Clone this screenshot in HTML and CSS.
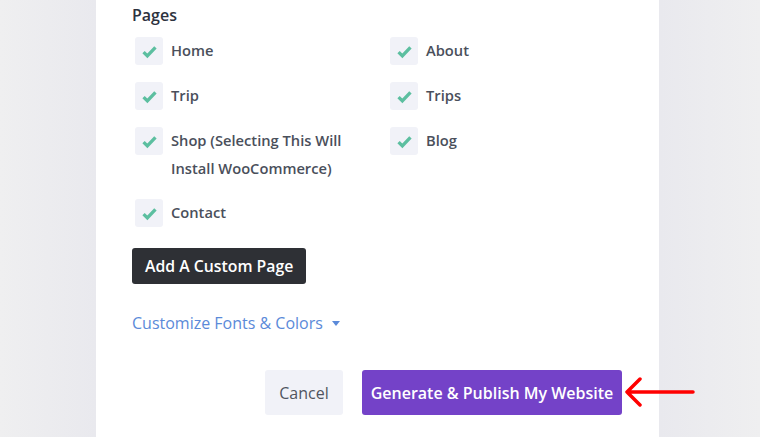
FILE: index.html
```html
<!DOCTYPE html>
<html lang="en">
<head>
    <meta charset="UTF-8">
    <meta name="viewport" content="width=device-width, initial-scale=1.0">
    <title>Onboarding - Pages</title>
    <link rel="stylesheet" href="styles.css">
</head>
<body>
    <div class="panel">
        <h3 class="label">Pages</h3>

        <div class="pages">
            <label class="page"><span class="box"><svg viewBox="0 0 16 16"><path d="M3 8.5l3.2 3.2L13 4.5"/></svg></span><span>Home</span></label>
            <label class="page"><span class="box"><svg viewBox="0 0 16 16"><path d="M3 8.5l3.2 3.2L13 4.5"/></svg></span><span>About</span></label>
            <label class="page"><span class="box"><svg viewBox="0 0 16 16"><path d="M3 8.5l3.2 3.2L13 4.5"/></svg></span><span>Trip</span></label>
            <label class="page"><span class="box"><svg viewBox="0 0 16 16"><path d="M3 8.5l3.2 3.2L13 4.5"/></svg></span><span>Trips</span></label>
            <label class="page"><span class="box"><svg viewBox="0 0 16 16"><path d="M3 8.5l3.2 3.2L13 4.5"/></svg></span><span>Shop (Selecting This Will Install WooCommerce)</span></label>
            <label class="page"><span class="box"><svg viewBox="0 0 16 16"><path d="M3 8.5l3.2 3.2L13 4.5"/></svg></span><span>Blog</span></label>
            <label class="page"><span class="box"><svg viewBox="0 0 16 16"><path d="M3 8.5l3.2 3.2L13 4.5"/></svg></span><span>Contact</span></label>
        </div>

        <button class="button dark">Add A Custom Page</button>

        <a class="toggle" href="#">Customize Fonts &amp; Colors <span class="caret"></span></a>

        <div class="actions">
            <button class="button light">Cancel</button>
            <button class="button purple">Generate &amp; Publish My Website</button>
            <svg class="arrow" viewBox="0 0 72 32">
                <path d="M70 15H4M17 2L4 15l13 13"/>
            </svg>
        </div>
    </div>
</body>
</html>
```

FILE: styles.css
```css
body {
    margin: 0;
    height: 437px;
    overflow: hidden;
    font-family: "Open Sans", Arial, sans-serif;
    background: linear-gradient(to right, #efeff0 0%, #e9e9ee 12.6%, #e9e9ee 86.8%, #efeff0 100%);
}
.panel {
    margin-left: 96px;
    width: 527px;
    height: 437px;
    padding-left: 36px;
    background: #fff;
}
.label {
    margin: 0;
    padding-top: 4px;
    font-size: 16px;
    font-weight: 600;
    line-height: 22px;
    color: #2d323e;
}
.pages {
    display: grid;
    grid-template-columns: 255px 240px;
    row-gap: 17px;
    margin-top: 11px;
    padding-left: 3px;
}
.page {
    display: flex;
    align-items: flex-start;
    gap: 8px;
    font-size: 14.7px;
    font-weight: 600;
    line-height: 27.5px;
    color: #4a4f5b;
}
.page span:last-child {
    width: 200px;
}
.box {
    flex: none;
    width: 28px;
    height: 28px;
    border-radius: 3px;
    background: #f1f2f8;
    display: flex;
    align-items: center;
    justify-content: center;
}
.box svg {
    width: 19px;
    height: 19px;
    fill: none;
    stroke: #5cbfa0;
    stroke-width: 2.8;
}
.button {
    border: none;
    border-radius: 3px;
    font-family: inherit;
    font-weight: 600;
    white-space: nowrap;
    cursor: pointer;
}
.dark {
    display: block;
    margin-top: 21px;
    height: 36px;
    padding: 0 13px;
    font-size: 15.8px;
    background: #2e3035;
    color: #fff;
}
.toggle {
    display: inline-flex;
    align-items: center;
    gap: 9px;
    margin-top: 28px;
    font-size: 16px;
    color: #5b8ad9;
    text-decoration: none;
}
.caret {
    width: 0;
    height: 0;
    border-left: 4.5px solid transparent;
    border-right: 4.5px solid transparent;
    border-top: 5px solid #5b8ad9;
}
.actions {
    display: flex;
    align-items: center;
    gap: 19px;
    margin-top: 36px;
    padding-left: 133px;
    position: relative;
}
.light, .purple {
    height: 45px;
    font-size: 16px;
}
.light {
    width: 78px;
    padding: 0;
    background: #f1f2f8;
    color: #50555f;
    font-weight: 500;
}
.purple {
    width: 260px;
    padding: 0;
    background: #7442c8;
    color: #fff;
}
.arrow {
    position: absolute;
    left: 491px;
    top: 7px;
    width: 72px;
    height: 32px;
    fill: none;
    stroke: #f00;
    stroke-width: 3.5;
    stroke-linecap: round;
    stroke-linejoin: round;
}
```
